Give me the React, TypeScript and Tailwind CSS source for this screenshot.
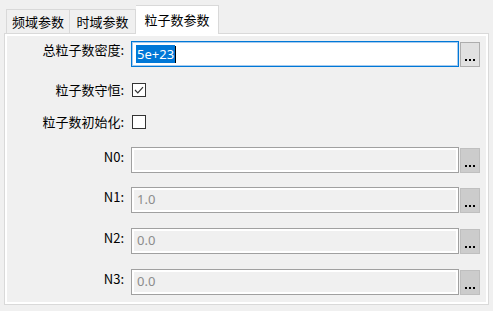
import React from 'react';

const FONT = "font-['Noto_Sans_CJK_SC','Noto_Sans',sans-serif]";

const DotsButton: React.FC<{ disabled?: boolean }> = ({ disabled }) => (
  <button
    className={`h-[25px] w-[20px] border flex items-end justify-center pb-[5px] ${
      disabled ? 'bg-[#cccccc] border-[#bfbfbf]' : 'bg-[#e1e1e1] border-[#adadad]'
    }`}
  >
    <span className="flex gap-[2px]">
      <span className="w-[2px] h-[2px] bg-black" />
      <span className="w-[2px] h-[2px] bg-black" />
      <span className="w-[2px] h-[2px] bg-black" />
    </span>
  </button>
);

const Checkbox: React.FC<{ checked?: boolean }> = ({ checked }) => (
  <div className="w-[14px] h-[14px] border border-[#333333] bg-white flex items-center justify-center">
    {checked && (
      <svg width="10" height="8" viewBox="0 0 10 8">
        <path d="M1 4 L3.8 6.8 L9 1.2" fill="none" stroke="#333" strokeWidth="1.2" />
      </svg>
    )}
  </div>
);

const ValueRow: React.FC<{ label: string; value: string; mt: string }> = ({ label, value, mt }) => (
  <div className={`flex items-start ${mt}`}>
    <div className="w-[120px] text-right leading-[20px] pr-[1px]">{label}</div>
    <div className="ml-[6px] w-[328px] h-[26px] border border-[#a0a0a0] bg-[#f0f0f0] shadow-[inset_0_0_0_2px_#ffffff] flex items-center pl-[5px] text-[#8c8c8c] font-['Noto_Sans',sans-serif]">
      {value}
    </div>
    <div className="ml-[1px] pt-[1px]">
      <DotsButton disabled />
    </div>
  </div>
);

export default function App() {
  return (
    <div className={`w-[493px] h-[311px] bg-[#f0f0f0] px-[4px] pt-[5px] text-[13px] text-black ${FONT}`}>
      {/* Tabs */}
      <div className="flex items-end h-[28px] pl-[2px]">
        <div className="h-[24px] w-[64px] border border-b-0 border-[#d9d9d9] flex items-center justify-center">频域参数</div>
        <div className="h-[24px] w-[66px] border border-l-0 border-b-0 border-[#d9d9d9] flex items-center justify-center">时域参数</div>
        <div className="relative z-10 -mb-px h-[29px] w-[83px] bg-white border border-l-0 border-b-0 border-[#d9d9d9] flex items-center justify-center">粒子数参数</div>
      </div>

      {/* Pane */}
      <div className="h-[272px] border border-[#d9d9d9] shadow-[inset_0_0_0_2px_#ffffff] bg-[#f0f0f0] pt-[7px]">
        <div className="flex items-start">
          <div className="w-[120px] text-right leading-[18px] pr-[1px]">总粒子数密度:</div>
          <div className="ml-[6px] w-[328px] h-[26px] border border-[#0078d7] bg-white shadow-[inset_0_0_0_1px_#a6cbef] flex items-center pl-[4px] font-['Noto_Sans',sans-serif]">
            <span className="bg-[#0078d7] text-white h-[18px] leading-[18px] px-[1px]">5e+23</span>
            <span className="w-px h-[17px] bg-black" />
          </div>
          <div className="ml-[1px] pt-[1px]">
            <DotsButton />
          </div>
        </div>

        <div className="flex items-center h-[20px] mt-[13px]">
          <div className="w-[120px] text-right pr-[1px]">粒子数守恒:</div>
          <div className="ml-[7px]">
            <Checkbox checked />
          </div>
        </div>

        <div className="flex items-center h-[20px] mt-[12px]">
          <div className="w-[120px] text-right pr-[1px]">粒子数初始化:</div>
          <div className="ml-[7px]">
            <Checkbox />
          </div>
        </div>

        <ValueRow label="N0:" value="" mt="mt-[15px]" />
        <ValueRow label="N1:" value="1.0" mt="mt-[14px]" />
        <ValueRow label="N2:" value="0.0" mt="mt-[15px]" />
        <ValueRow label="N3:" value="0.0" mt="mt-[15px]" />
      </div>
    </div>
  );
}
